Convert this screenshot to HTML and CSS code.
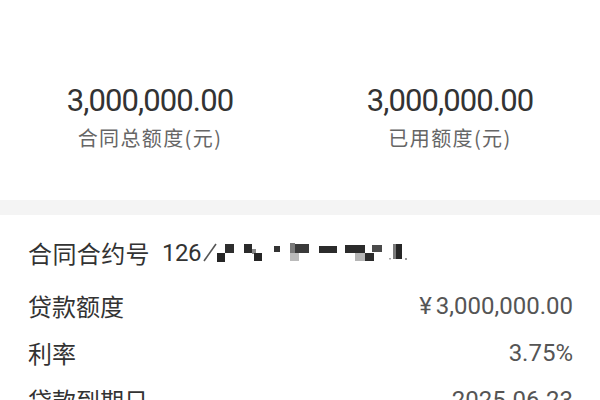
FILE: index.html
```html
<!DOCTYPE html>
<html lang="zh-CN">
<head>
<meta charset="utf-8">
<title>合同详情</title>
<link rel="stylesheet" href="styles.css">
</head>
<body>
<section class="stats">
  <div class="stat">
    <div class="stat-num">3,000,000.00</div>
    <div class="stat-label">合同总额度(元)</div>
  </div>
  <div class="stat">
    <div class="stat-num">3,000,000.00</div>
    <div class="stat-label">已用额度(元)</div>
  </div>
</section>
<div class="band"></div>
<section class="detail">
  <div class="contract">
    <span class="contract-label">合同合约号</span><span class="contract-no">126</span><svg class="mask" width="210" height="24" viewBox="200 240 210 24" aria-hidden="true">
      <line x1="202" y1="260" x2="214" y2="243" stroke="#555" stroke-width="1.6"/>
      <rect x="223" y="243" width="9" height="9" fill="#2e2e2e"/>
      <rect x="215" y="252" width="8" height="9" fill="#262626"/>
      <rect x="242" y="243" width="8" height="9" fill="#2b2b2b"/>
      <rect x="250" y="248" width="4" height="5" fill="#888"/>
      <rect x="252" y="252" width="8" height="8" fill="#262626"/>
      <rect x="272" y="245" width="6" height="6" fill="#333"/>
      <rect x="288" y="242" width="5" height="10" fill="#7a7a7a"/>
      <rect x="293" y="243" width="14" height="9" fill="#3a3a3a"/>
      <rect x="288" y="252" width="9" height="8" fill="#bbbbbb"/>
      <rect x="317" y="245" width="18" height="7" fill="#2b2b2b"/>
      <rect x="343" y="244" width="20" height="8" fill="#2b2b2b"/>
      <rect x="370" y="244" width="10" height="7" fill="#4a4a4a"/>
      <rect x="353" y="252" width="10" height="8" fill="#b5b5b5"/>
      <rect x="363" y="252" width="9" height="8" fill="#2b2b2b"/>
      <rect x="391" y="243" width="3" height="15" fill="#7a7a7a"/>
      <rect x="394" y="243" width="6" height="15" fill="#262626"/>
      <rect x="387" y="257" width="2" height="1.5" fill="#aaa"/>
      <rect x="403" y="257" width="2" height="2" fill="#999"/>
    </svg>
  </div>
  <div class="rows">
    <div class="row">
      <span class="row-label">贷款额度</span>
      <span class="row-value"><span class="yen">¥</span>3,000,000.00</span>
    </div>
    <div class="row">
      <span class="row-label">利率</span>
      <span class="row-value">3.75%</span>
    </div>
    <div class="row">
      <span class="row-label">贷款到期日</span>
      <span class="row-value">2025-06-23</span>
    </div>
  </div>
</section>
</body>
</html>
```
FILE: styles.css
```css
html, body {
  margin: 0;
  padding: 0;
  background: #ffffff;
}
body {
  width: 600px;
  height: 400px;
  overflow: hidden;
  font-family: "Noto Sans CJK SC", "Noto Sans", sans-serif;
}
.stats {
  display: grid;
  grid-template-columns: 1fr 1fr;
  padding: 83px 0 49px;
}
.stat {
  display: flex;
  flex-direction: column;
  align-items: center;
}
.stat-num {
  font-family: "Roboto", "Noto Sans CJK SC", sans-serif;
  font-size: 31px;
  line-height: 36px;
  letter-spacing: -0.9px;
  color: #333333;
}
.stat-label {
  margin-top: 6px;
  font-size: 20px;
  line-height: 26px;
  letter-spacing: 1.4px;
  color: #666666;
}
.band {
  height: 15px;
  background: #f4f4f4;
}
.detail {
  padding: 22px 27px 0 28px;
}
.contract {
  display: flex;
  align-items: center;
  height: 32px;
  color: #333333;
}
.contract-label {
  font-size: 24px;
  line-height: 32px;
  letter-spacing: 0.4px;
}
.contract-no {
  margin-left: 12px;
  font-family: "Roboto", sans-serif;
  font-size: 24px;
  line-height: 32px;
  letter-spacing: -0.5px;
}
.mask {
  display: block;
  margin-left: 1px;
}
.rows {
  display: flex;
  flex-direction: column;
  gap: 15px;
  margin-top: 21px;
}
.row {
  display: flex;
  justify-content: space-between;
  align-items: center;
  height: 32px;
}
.row-label {
  font-size: 24px;
  line-height: 32px;
  color: #333333;
}
.row-value {
  font-family: "Roboto", "Noto Sans CJK SC", sans-serif;
  font-size: 24px;
  line-height: 32px;
  letter-spacing: 0;
  color: #555555;
}
.yen {
  margin-right: 4px;
}
```
